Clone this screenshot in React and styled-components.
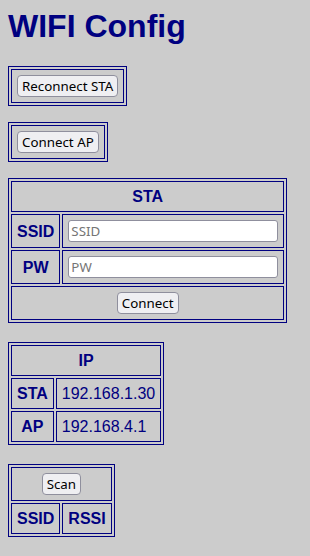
import React from "react";
import styled, { createGlobalStyle } from "styled-components";

const GlobalStyle = createGlobalStyle`
  body {
    margin: 8px;
    background: #cccccc;
    color: #000080;
    font-family: "Liberation Sans", Arial, sans-serif;
  }
`;

const Title = styled.h1`
  margin: 0 0 21px;
  font-size: 32px;
  font-weight: bold;
  color: #000080;
`;

const Table = styled.table`
  border: 1px solid #000080;
  border-spacing: 2px;
  margin-bottom: ${(p) => p.$gap || 16}px;
  font-size: 16px;
  td,
  th {
    border: 1px solid #000080;
    padding: 5px;
    line-height: 19px;
    text-align: center;
    color: #000080;
  }
`;

const Value = styled.td`
  && {
    text-align: left;
  }
`;

const Button = styled.button`
  font-family: "Noto Sans", sans-serif;
  font-size: 13.333px;
  color: #000000;
  background: #efeff2;
  border: 1px solid #8f8f9d;
  border-radius: 4px;
  padding: 1px 4px;
  height: 22px;
  box-sizing: border-box;
  line-height: normal;
  vertical-align: top;
`;

const Field = styled.input`
  width: 210px;
  height: 22px;
  box-sizing: border-box;
  vertical-align: top;
  font-family: "Noto Sans", sans-serif;
  font-size: 13.333px;
  background: #ffffff;
  border: 1px solid #8f8f9d;
  border-radius: 3px;
  padding: 1px 2px;
  &::placeholder {
    color: #757575;
  }
`;

const App = () => {
  return (
    <>
      <GlobalStyle />
      <Title>WIFI Config</Title>
      <Table>
        <tbody>
          <tr>
            <td>
              <Button>Reconnect STA</Button>
            </td>
          </tr>
        </tbody>
      </Table>
      <Table>
        <tbody>
          <tr>
            <td>
              <Button>Connect AP</Button>
            </td>
          </tr>
        </tbody>
      </Table>
      <Table $gap={19}>
        <tbody>
          <tr>
            <th colSpan={2}>STA</th>
          </tr>
          <tr>
            <th>SSID</th>
            <td>
              <Field type="text" placeholder="SSID" />
            </td>
          </tr>
          <tr>
            <th>PW</th>
            <td>
              <Field type="password" placeholder="PW" />
            </td>
          </tr>
          <tr>
            <td colSpan={2}>
              <Button>Connect</Button>
            </td>
          </tr>
        </tbody>
      </Table>
      <Table $gap={19}>
        <tbody>
          <tr>
            <th colSpan={2}>IP</th>
          </tr>
          <tr>
            <th>STA</th>
            <Value>192.168.1.30</Value>
          </tr>
          <tr>
            <th>AP</th>
            <Value>192.168.4.1</Value>
          </tr>
        </tbody>
      </Table>
      <Table>
        <tbody>
          <tr>
            <td colSpan={2}>
              <Button>Scan</Button>
            </td>
          </tr>
          <tr>
            <th>SSID</th>
            <th>RSSI</th>
          </tr>
        </tbody>
      </Table>
    </>
  );
};

export default App;
